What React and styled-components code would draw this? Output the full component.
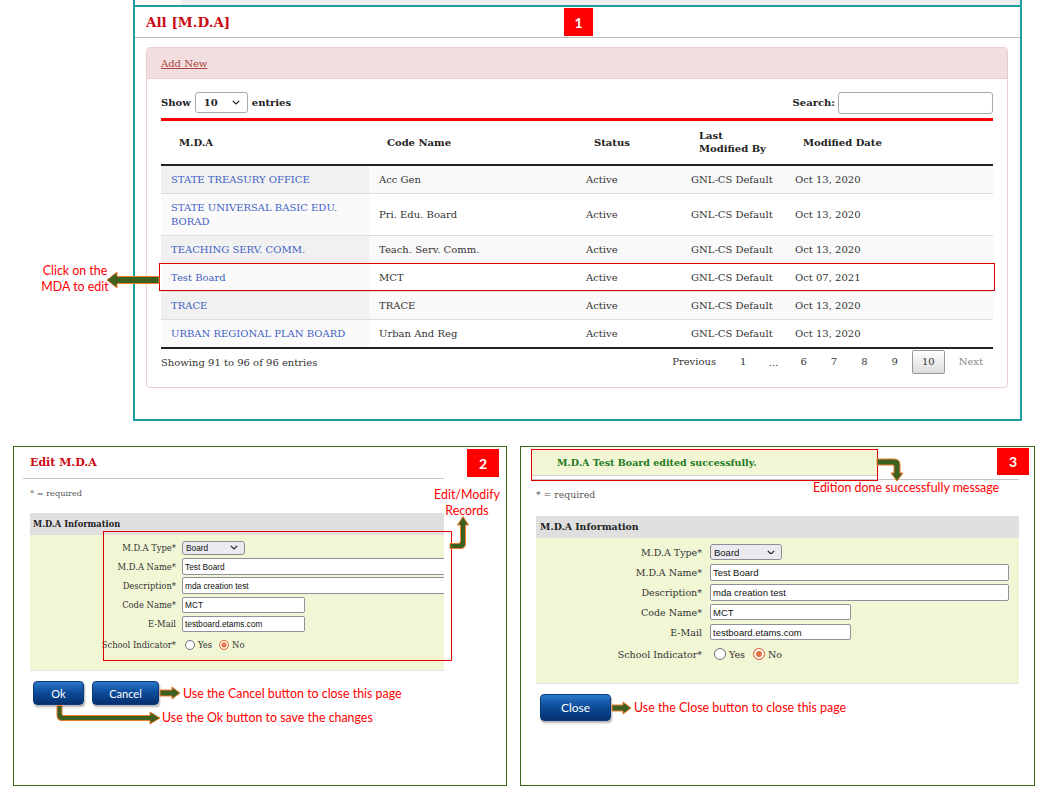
import React from 'react';
import styled, { createGlobalStyle, css, ThemeProvider } from 'styled-components';

const TEAL = '#1f9ea1';
const PANEL_GREEN = '#3d6b1e';
const TITLE_RED = '#cc0a14';
const FORM_BG = '#f1f6d5';
const NOTE_RED = '#ff0000';

const GlobalStyle = createGlobalStyle`
  * { box-sizing: border-box; }
  html, body { margin: 0; padding: 0; background: #fff; }
  body { font-family: "DejaVu Serif", serif; color: #333; }
`;

const Page = styled.div`
  position: relative;
  width: 1042px;
  height: 794px;
  overflow: hidden;
  display: flex;
  flex-direction: column;
`;

/* ---------- top list screen ---------- */
const TopArea = styled.section`
  display: flex;
  padding-left: 133px;
  height: 421px;
  flex-shrink: 0;
`;
const TopFrame = styled.div`
  width: 889px;
  border-left: 2px solid ${TEAL};
  border-right: 2px solid ${TEAL};
  display: flex;
  flex-direction: column;
`;
const TabStrip = styled.div`
  height: 5px;
  flex-shrink: 0;
  background: #eeeeee;
  display: flex;
`;
const Tab = styled.div`
  width: 46px;
  background: #f9f9f9;
`;
const ListPanel = styled.div`
  flex: 1;
  border-top: 2px solid ${TEAL};
  border-bottom: 2px solid ${TEAL};
  display: flex;
  flex-direction: column;
`;
const ListHeader = styled.div`
  height: 31px;
  flex-shrink: 0;
  border-bottom: 1px solid #bdbdbd;
  display: flex;
  align-items: center;
  padding-left: 11px;
`;
const PageTitle = styled.h1`
  margin: 0;
  font-size: 13.5px;
  font-weight: bold;
  color: ${TITLE_RED};
`;
const Card = styled.div`
  margin: 9px 12px 0 11px;
  flex-shrink: 0;
  border: 1px solid #ebccd1;
  border-radius: 4px;
  display: flex;
  flex-direction: column;
`;
const CardHeader = styled.div`
  height: 31px;
  flex-shrink: 0;
  background: #f2dede;
  border-bottom: 1px solid #ebccd1;
  border-radius: 3px 3px 0 0;
  display: flex;
  align-items: center;
  padding-left: 14px;
`;
const AddNew = styled.a`
  font-size: 10px;
  color: #a94442;
  text-decoration: underline;
`;
const CardBody = styled.div`
  padding: 13px 14px 13px;
`;
const Controls = styled.div`
  height: 21px;
  display: flex;
  align-items: center;
  justify-content: space-between;
  font-size: 10px;
  font-weight: bold;
  color: #222;
`;
const ControlGroup = styled.label`
  display: flex;
  align-items: center;
  gap: 4px;
`;
const LengthSelect = styled.div`
  width: 53px;
  height: 21px;
  border: 1px solid #aaa;
  border-radius: 3px;
  background: #fff;
  display: flex;
  align-items: center;
  justify-content: space-between;
  padding: 0 7px 0 8px;
  font-size: 10px;
  font-weight: bold;
`;
const SearchInput = styled.input`
  width: 155px;
  height: 22px;
  border: 1px solid #aaa;
  border-radius: 3px;
  margin-left: -1px;
`;
const Table = styled.table`
  width: 100%;
  margin-top: 5px;
  border-collapse: collapse;
  table-layout: fixed;
  border-top: 3px solid #ff0000;
  border-bottom: 2px solid #222;
  font-size: 10px;
`;
const Th = styled.th`
  text-align: left;
  font-weight: bold;
  color: #222;
  padding: 8px 10px 9px 18px;
  line-height: 13px;
  border-bottom: 2px solid #222;
`;
const Tr = styled.tr`
  background: ${p => (p.$odd ? '#f9f9f9' : '#ffffff')};
`;
const Td = styled.td`
  padding: 7px 10px 6px;
  line-height: 14px;
  border-top: 1px solid #dddddd;
  color: #333;
  background: ${p => (p.$sorted ? (p.$odd ? '#f1f1f1' : '#fafafa') : 'transparent')};
`;
const MdaLink = styled.a`
  color: #3f5fc4;
  text-decoration: none;
`;
const TableFooter = styled.div`
  margin-top: 1px;
  display: flex;
  align-items: center;
  justify-content: space-between;
  font-size: 10px;
`;
const Pagination = styled.div`
  display: flex;
  align-items: center;
`;
const PageBtn = styled.span`
  margin-left: 4px;
  padding: 5px 9px;
  line-height: 12px;
  border: 1px solid transparent;
  border-radius: 2px;
  color: ${p => (p.$disabled ? '#888' : '#333')};
  ${p => p.$current && css`
    border-color: #979797;
    background: linear-gradient(#ffffff, #dcdcdc);
  `}
`;
const Ellipsis = styled.span`
  margin-left: 4px;
  padding: 0 8px;
`;

/* ---------- bottom form screens ---------- */
const BottomArea = styled.section`
  margin-top: 25px;
  padding-left: 13px;
  display: flex;
  gap: 13px;
`;
const FormPanel = styled.div`
  width: ${p => p.theme.panelW}px;
  height: 340px;
  border: 1px solid ${PANEL_GREEN};
  padding: 0 ${p => p.theme.padR}px 0 ${p => p.theme.padL}px;
  display: flex;
  flex-direction: column;
`;
const PanelHeader = styled.div`
  height: ${p => p.theme.headH}px;
  flex-shrink: 0;
  border-bottom: 1px solid #c4c4c4;
  display: flex;
  align-items: ${p => (p.$top ? 'flex-start' : 'center')};
  padding-top: ${p => (p.$top ? 3 : 0)}px;
`;
const PanelTitle = styled.h2`
  margin: 0 0 0 7px;
  font-size: 11px;
  font-weight: bold;
  color: ${TITLE_RED};
`;
const SuccessBox = styled.div`
  width: 346px;
  height: 26px;
  background: ${FORM_BG};
  border-bottom: 1px solid #cfcfcf;
  display: flex;
  align-items: center;
  padding-left: 26px;
  font-size: 9.5px;
  font-weight: bold;
  color: #1f7a1f;
`;
const Required = styled.div`
  margin: ${p => p.theme.reqTop}px 0 0 ${p => p.theme.inset}px;
  line-height: 12px;
  font-size: ${p => p.theme.required}px;
  color: #555;
`;
const Section = styled.div`
  margin: ${p => p.theme.secTop}px 0 0 ${p => p.theme.inset}px;
`;
const SectionHead = styled.div`
  height: 22px;
  line-height: 22px;
  background: #dfdfdf;
  padding-left: ${p => p.theme.secPad}px;
  font-size: ${p => p.theme.section}px;
  font-weight: bold;
  color: #222;
`;
const FormBody = styled.div`
  height: ${p => p.theme.bodyH}px;
  background: ${FORM_BG};
  padding-top: ${p => p.theme.bodyPad}px;
  overflow: hidden;
  border-bottom: 1px solid #e3e3e3;
`;
const FormRow = styled.div`
  height: ${p => p.theme.rowH}px;
  margin-top: ${p => (p.$extra ? 2 : 0)}px;
  display: flex;
  align-items: center;
  gap: ${p => p.theme.gap}px;
`;
const FieldLabel = styled.label`
  width: ${p => p.theme.labelW}px;
  flex-shrink: 0;
  text-align: right;
  font-size: ${p => p.theme.label}px;
  color: #333;
  white-space: nowrap;
`;
const TypeSelect = styled.div`
  width: ${p => p.theme.selectW}px;
  height: ${p => p.theme.selectH}px;
  border: 1px solid #8d8d99;
  border-radius: 3px;
  background: #ebebef;
  display: flex;
  align-items: center;
  justify-content: space-between;
  padding: 0 6px 0 3px;
  font-family: "Liberation Sans", Arial, sans-serif;
  font-size: ${p => p.theme.input}px;
  color: #111;
`;
const TextField = styled.input`
  flex-shrink: 0;
  width: ${p => (p.$long ? p.theme.longW : p.theme.shortW)}px;
  height: ${p => (p.$long ? 17 : 16)}px;
  border: 1px solid #8f8f9d;
  border-radius: 2px;
  background: #fff;
  padding: 0 2px;
  font-family: "Liberation Sans", Arial, sans-serif;
  font-size: ${p => p.theme.input}px;
  color: #111;
  outline: none;
`;
const RadioGroup = styled.div`
  display: flex;
  align-items: center;
  margin-left: ${p => p.theme.radioLead}px;
  font-size: ${p => p.theme.label}px;
  color: #333;
`;
const RadioOption = styled.span`
  display: flex;
  align-items: center;
  gap: 3px;
  margin-right: ${p => p.theme.radioSep}px;
`;
const RadioDot = styled.span`
  width: ${p => p.theme.radio}px;
  height: ${p => p.theme.radio}px;
  border-radius: 50%;
  border: 1px solid #6f6f80;
  background: #fff;
  ${p => p.$on && css`
    border: 1.5px solid #e9703f;
    background: #e9703f;
    box-shadow: inset 0 0 0 ${p.theme.ring}px #fff;
  `}
`;
const ButtonRow = styled.div`
  margin: 10px 0 0 ${p => p.theme.btnLead}px;
  display: flex;
  align-items: center;
`;
const BlueButton = styled.button`
  width: ${p => p.$w}px;
  height: ${p => p.theme.btnH}px;
  border: 1px solid #0b3a78;
  border-radius: 4px;
  background: linear-gradient(#2c78c8 0%, #0d4d9c 45%, #04306f 100%);
  box-shadow: 1px 2px 2px rgba(0, 0, 0, 0.3);
  color: #fff;
  font-family: Lato, "Liberation Sans", sans-serif;
  font-size: ${p => p.theme.btnFont}px;
  padding: 0;
  & + & { margin-left: 8px; }
`;
const Note = styled.span`
  margin-left: 2px;
  font-family: Lato, "Liberation Sans", sans-serif;
  font-size: 12.4px;
  color: ${NOTE_RED};
  white-space: nowrap;
`;
const ArrowSvg = styled.svg`
  display: block;
  flex-shrink: 0;
  overflow: visible;
`;

/* ---------- annotation overlays ---------- */
const Badge = styled.div`
  position: absolute;
  left: ${p => p.$x}px;
  top: ${p => p.$y}px;
  width: ${p => p.$w}px;
  height: ${p => p.$h}px;
  background: #ff0000;
  color: #fff;
  font-family: Lato, "Liberation Sans", sans-serif;
  font-weight: bold;
  font-size: 14px;
  display: flex;
  align-items: center;
  justify-content: center;
`;
const RedFrame = styled.div`
  position: absolute;
  left: ${p => p.$x}px;
  top: ${p => p.$y}px;
  width: ${p => p.$w}px;
  height: ${p => p.$h}px;
  border: 1px solid #e00000;
  pointer-events: none;
`;
const Callout = styled.div`
  position: absolute;
  left: ${p => p.$x}px;
  top: ${p => p.$y}px;
  width: ${p => (p.$w ? `${p.$w}px` : 'auto')};
  text-align: ${p => (p.$w ? 'center' : 'left')};
  font-family: Lato, "Liberation Sans", sans-serif;
  font-size: 12.4px;
  line-height: 16px;
  color: ${NOTE_RED};
  white-space: nowrap;
`;
const ArrowSpot = styled.div`
  position: absolute;
  left: ${p => p.$x}px;
  top: ${p => p.$y}px;
`;

const ARROW_FILL = '#3d5f1f';
const ARROW_EDGE = '#ec7c30';

function HArrow({ length, height = 12, body = 6, head = 9, left = false }) {
  const H = height + 2;
  const cy = H / 2;
  const L = length;
  const d = `M1,${cy - body / 2} H${L - head} V${cy - height / 2} L${L - 1},${cy} L${L - head},${cy + height / 2} V${cy + body / 2} H1 Z`;
  return (
    <ArrowSvg width={L} height={H} viewBox={`0 0 ${L} ${H}`}>
      <path
        d={d}
        fill={ARROW_FILL}
        stroke={ARROW_EDGE}
        strokeWidth="1"
        transform={left ? `translate(${L},0) scale(-1,1)` : undefined}
      />
    </ArrowSvg>
  );
}

function PathArrow({ w, h, d }) {
  return (
    <ArrowSvg width={w} height={h} viewBox={`0 0 ${w} ${h}`}>
      <path d={d} fill={ARROW_FILL} stroke={ARROW_EDGE} strokeWidth="1" />
    </ArrowSvg>
  );
}

function Chevron({ size = 8 }) {
  return (
    <svg width={size} height={size * 0.6} viewBox="0 0 10 6">
      <polyline points="1,1 5,5 9,1" fill="none" stroke="#222" strokeWidth="1.5" />
    </svg>
  );
}

const smallTheme = {
  panelW: 494, padL: 9, padR: 62, headH: 32, inset: 7,
  reqTop: 8, required: 8.2, secTop: 14, section: 8.3, secPad: 3,
  bodyH: 136, bodyPad: 3, rowH: 19, gap: 6, labelW: 146, label: 8.4,
  input: 8.3, selectW: 63, selectH: 14, longW: 280, shortW: 123,
  radio: 10, ring: 1.5, radioLead: 3, radioSep: 7,
  btnLead: 10, btnH: 24, btnFont: 11,
};
const largeTheme = {
  panelW: 515, padL: 10, padR: 15, headH: 33, inset: 5,
  reqTop: 9, required: 9.3, secTop: 15, section: 9.4, secPad: 4,
  bodyH: 146, bodyPad: 4, rowH: 20, gap: 8, labelW: 166, label: 9.5,
  input: 9.5, selectW: 72, selectH: 16, longW: 299, shortW: 141,
  radio: 12, ring: 2, radioLead: 4, radioSep: 8,
  btnLead: 9, btnH: 27, btnFont: 12,
};

const rows = [
  ['STATE TREASURY OFFICE', 'Acc Gen', 'Oct 13, 2020'],
  ['STATE UNIVERSAL BASIC EDU. BORAD', 'Pri. Edu. Board', 'Oct 13, 2020'],
  ['TEACHING SERV. COMM.', 'Teach. Serv. Comm.', 'Oct 13, 2020'],
  ['Test Board', 'MCT', 'Oct 07, 2021'],
  ['TRACE', 'TRACE', 'Oct 13, 2020'],
  ['URBAN REGIONAL PLAN BOARD', 'Urban And Reg', 'Oct 13, 2020'],
];

function MdaForm() {
  return (
    <Section>
      <SectionHead>M.D.A Information</SectionHead>
      <FormBody>
        <FormRow>
          <FieldLabel>M.D.A Type*</FieldLabel>
          <TypeSelect>Board<Chevron /></TypeSelect>
        </FormRow>
        <FormRow>
          <FieldLabel>M.D.A Name*</FieldLabel>
          <TextField $long readOnly value="Test Board" />
        </FormRow>
        <FormRow>
          <FieldLabel>Description*</FieldLabel>
          <TextField $long readOnly value="mda creation test" />
        </FormRow>
        <FormRow>
          <FieldLabel>Code Name*</FieldLabel>
          <TextField readOnly value="MCT" />
        </FormRow>
        <FormRow>
          <FieldLabel>E-Mail</FieldLabel>
          <TextField readOnly value="testboard.etams.com" />
        </FormRow>
        <FormRow $extra>
          <FieldLabel>School Indicator*</FieldLabel>
          <RadioGroup>
            <RadioOption><RadioDot />Yes</RadioOption>
            <RadioOption><RadioDot $on />No</RadioOption>
          </RadioGroup>
        </FormRow>
      </FormBody>
    </Section>
  );
}

export default function App() {
  return (
    <>
      <GlobalStyle />
      <Page>
        <TopArea>
          <TopFrame>
            <TabStrip><Tab /></TabStrip>
            <ListPanel>
              <ListHeader>
                <PageTitle>All [M.D.A]</PageTitle>
              </ListHeader>
              <Card>
                <CardHeader>
                  <AddNew href="#">Add New</AddNew>
                </CardHeader>
                <CardBody>
                  <Controls>
                    <ControlGroup>
                      Show
                      <LengthSelect>10<Chevron /></LengthSelect>
                      entries
                    </ControlGroup>
                    <ControlGroup>
                      Search:
                      <SearchInput />
                    </ControlGroup>
                  </Controls>
                  <Table>
                    <colgroup>
                      <col style={{ width: 208 }} />
                      <col style={{ width: 207 }} />
                      <col style={{ width: 105 }} />
                      <col style={{ width: 104 }} />
                      <col style={{ width: 208 }} />
                    </colgroup>
                    <thead>
                      <tr>
                        <Th>M.D.A</Th>
                        <Th>Code Name</Th>
                        <Th>Status</Th>
                        <Th>Last<br />Modified By</Th>
                        <Th>Modified Date</Th>
                      </tr>
                    </thead>
                    <tbody>
                      {rows.map((r, i) => {
                        const odd = i % 2 === 0;
                        return (
                          <Tr key={r[0]} $odd={odd}>
                            <Td $sorted $odd={odd}><MdaLink href="#">{r[0]}</MdaLink></Td>
                            <Td>{r[1]}</Td>
                            <Td>Active</Td>
                            <Td>GNL-CS Default</Td>
                            <Td>{r[2]}</Td>
                          </Tr>
                        );
                      })}
                    </tbody>
                  </Table>
                  <TableFooter>
                    <span>Showing 91 to 96 of 96 entries</span>
                    <Pagination>
                      <PageBtn>Previous</PageBtn>
                      <PageBtn>1</PageBtn>
                      <Ellipsis>…</Ellipsis>
                      <PageBtn>6</PageBtn>
                      <PageBtn>7</PageBtn>
                      <PageBtn>8</PageBtn>
                      <PageBtn>9</PageBtn>
                      <PageBtn $current>10</PageBtn>
                      <PageBtn $disabled>Next</PageBtn>
                    </Pagination>
                  </TableFooter>
                </CardBody>
              </Card>
            </ListPanel>
          </TopFrame>
        </TopArea>

        <BottomArea>
          <ThemeProvider theme={smallTheme}>
            <FormPanel>
              <PanelHeader>
                <PanelTitle>Edit M.D.A</PanelTitle>
              </PanelHeader>
              <Required>* = required</Required>
              <MdaForm />
              <ButtonRow>
                <BlueButton $w={51}>Ok</BlueButton>
                <BlueButton $w={67}>Cancel</BlueButton>
                <HArrow length={22} height={12} body={6} head={9} />
                <Note>Use the Cancel button to close this page</Note>
              </ButtonRow>
            </FormPanel>
          </ThemeProvider>
          <ThemeProvider theme={largeTheme}>
            <FormPanel>
              <PanelHeader $top>
                <SuccessBox>M.D.A Test Board edited successfully.</SuccessBox>
              </PanelHeader>
              <Required>* = required</Required>
              <MdaForm />
              <ButtonRow>
                <BlueButton $w={71}>Close</BlueButton>
                <HArrow length={21} height={12} body={6} head={9} />
                <Note>Use the Close button to close this page</Note>
              </ButtonRow>
            </FormPanel>
          </ThemeProvider>
        </BottomArea>

        {/* annotations over the screenshots */}
        <Badge $x={564} $y={8} $w={29} $h={28}>1</Badge>
        <Badge $x={467} $y={449} $w={32} $h={28}>2</Badge>
        <Badge $x={997} $y={448} $w={32} $h={27}>3</Badge>

        <RedFrame $x={159} $y={263} $w={836} $h={28} />
        <Callout $x={36} $y={263} $w={78}>Click on the<br />MDA to edit</Callout>
        <ArrowSpot $x={106} $y={271}>
          <HArrow length={54} height={16} body={7} head={11} left />
        </ArrowSpot>

        <RedFrame $x={103} $y={531} $w={349} $h={130} />
        <Callout $x={428} $y={487} $w={78}>Edit/Modify<br />Records</Callout>
        <ArrowSpot $x={449} $y={515}>
          <PathArrow
            w={22}
            h={36}
            d="M1,28.5 H9 Q11.5,28.5 11.5,26 V10 H8.5 L14,1.5 L19.5,10 H16.5 V28.5 Q16.5,33.5 11.5,33.5 H1 Z"
          />
        </ArrowSpot>
        <ArrowSpot $x={55} $y={705}>
          <PathArrow
            w={108}
            h={21}
            d="M2,0.5 H7 V9 Q7,10.5 8.5,10.5 H95 V7 L105,13 L95,19 V15.5 H7 Q2,15.5 2,10.5 Z"
          />
        </ArrowSpot>
        <Callout $x={162} $y={710}>Use the Ok button to save the changes</Callout>

        <RedFrame $x={531} $y={449} $w={347} $h={32} />
        <ArrowSpot $x={875} $y={455}>
          <PathArrow
            w={30}
            h={28}
            d="M2,4 H19 Q25,4 25,10 V18 H28 L22,26 L16,18 H19 V11 Q19,10 18,10 H2 Z"
          />
        </ArrowSpot>
        <Callout $x={813} $y={480}>Edition done successfully message</Callout>
      </Page>
    </>
  );
}
